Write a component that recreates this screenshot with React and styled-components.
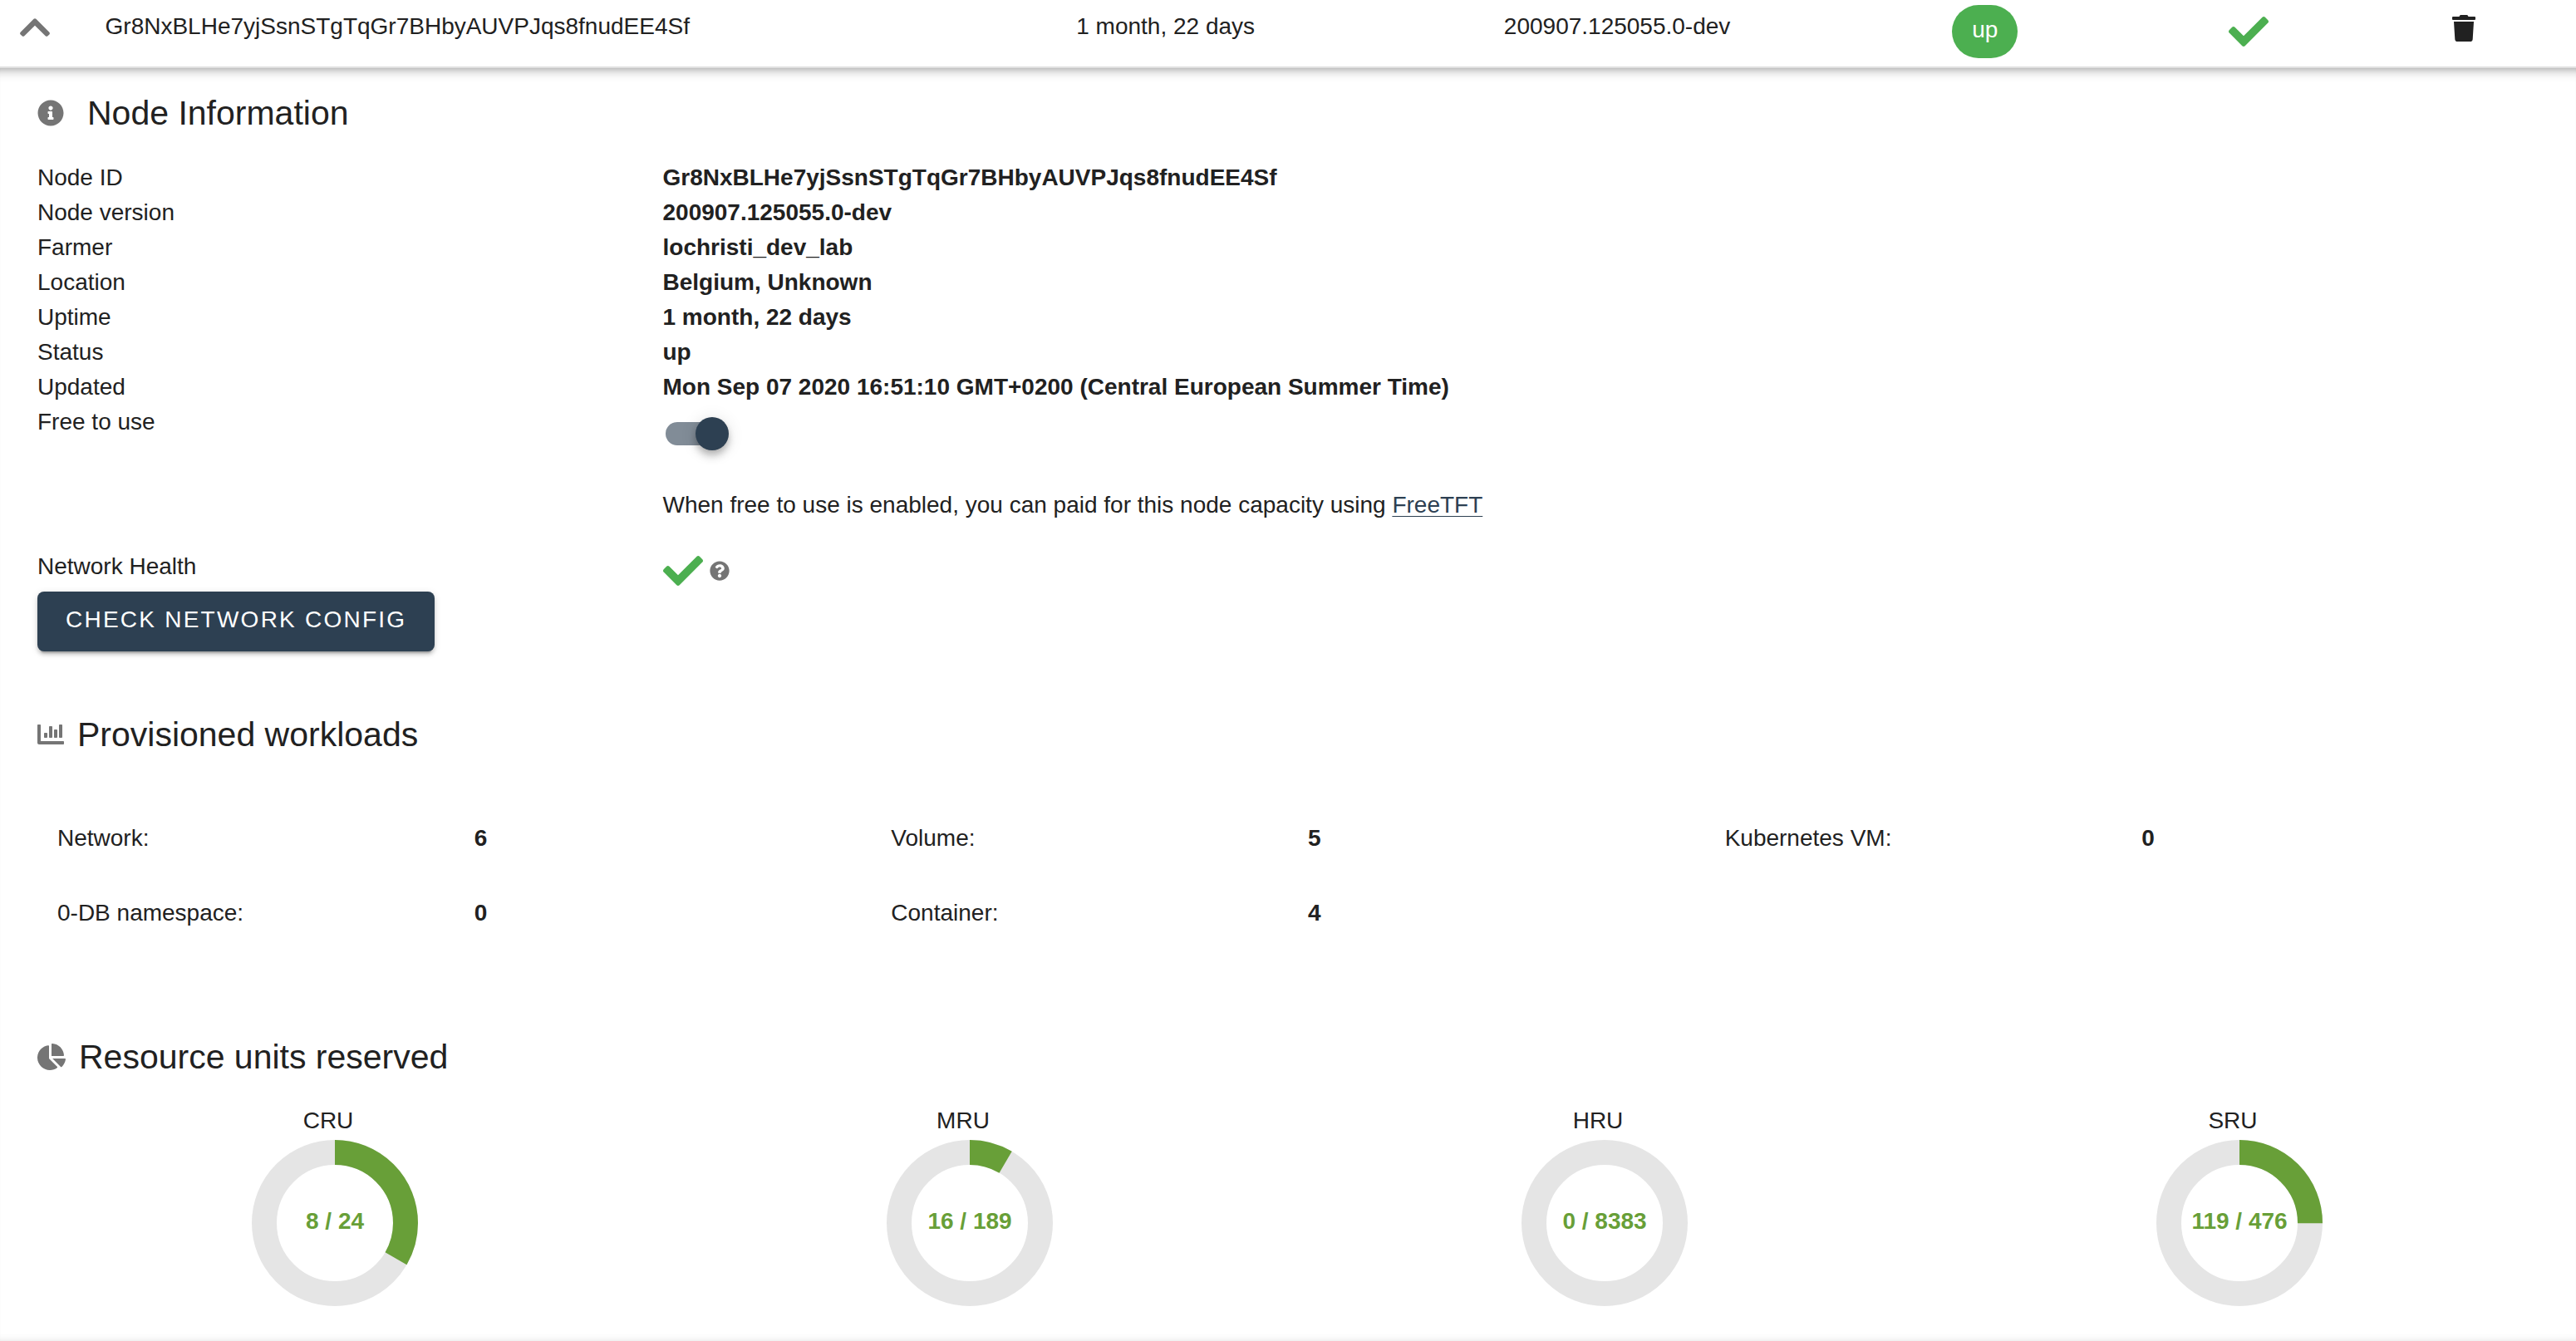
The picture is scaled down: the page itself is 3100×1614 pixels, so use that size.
import React, { useState } from "react";
import styled, { createGlobalStyle } from "styled-components";
import {
  FaChartBar,
  FaChartPie,
  FaCheck,
  FaChevronUp,
  FaInfoCircle,
  FaQuestionCircle,
  FaTrash,
} from "react-icons/fa";

const GlobalStyle = createGlobalStyle`
  *, *::before, *::after { box-sizing: border-box; }
  body {
    margin: 0;
    background: #fff;
    color: #212121;
    font-family: "Liberation Sans", Arial, Helvetica, sans-serif;
    font-size: 28px;
    line-height: 42px;
  }
`;

const Page = styled.main`
  display: flex;
  flex-direction: column;
  height: 100vh;
  overflow: hidden;
`;

const NodeTable = styled.table`
  width: 100%;
  table-layout: fixed;
  border-collapse: collapse;
  border-bottom: 2px solid #e0e0e0;
`;

const Column = styled.col`
  width: ${(p) => p.$share}%;
`;

const cellPadding = {
  text: "11px 32px 0",
  toggle: "12px 0 0 21px",
  chip: "6px 32px 0",
  check: "14px 32px 0",
  action: "18px 32px 0",
};

const Cell = styled.td`
  height: 81px;
  padding: ${(p) => cellPadding[p.$kind || "text"]};
  vertical-align: top;
`;

const IconButton = styled.button`
  display: block;
  padding: 0;
  border: 0;
  background: none;
  color: ${(p) => p.$color};
  cursor: pointer;

  svg { display: block; }
`;

const Icon = styled.span`
  display: flex;
  flex: none;
  color: ${(p) => p.$color || "#757575"};
  svg { display: block; }
`;

const Chip = styled.span`
  display: inline-flex;
  align-items: center;
  height: 64px;
  padding: 0 24px 4px;
  border-radius: 32px;
  background: #4caf50;
  color: #fff;
`;

const Details = styled.section`
  flex: none;
  margin: 0 -8px;
  padding: 26px 53px 48px;
  box-shadow: inset 0 8px 16px -10px rgba(50, 50, 50, 0.75),
    inset 0 -8px 16px -10px rgba(50, 50, 50, 0.75);
`;

const Title = styled.h2`
  display: flex;
  align-items: center;
  gap: ${(p) => p.$gap || 16}px;
  margin: 0;
  font-size: 41px;
  font-weight: 400;
  line-height: 56px;
`;

const InfoGrid = styled.dl`
  display: grid;
  grid-template-columns: 1fr 3fr;
  margin: 29px 0 72px;
`;

const Term = styled.dt``;

const Value = styled.dd`
  margin: 0;
  font-weight: ${(p) => (p.$plain ? 400 : 700)};
`;

const Switch = styled.input`
  position: relative;
  display: block;
  appearance: none;
  width: 72px;
  height: 28px;
  margin: 21px 3px 51px;
  border-radius: 14px;
  background: #818c97;
  cursor: pointer;

  &::before {
    content: "";
    position: absolute;
    top: -6px;
    left: -4px;
    width: 40px;
    height: 40px;
    border-radius: 50%;
    background: #2d4052;
    box-shadow: 0 4px 8px -2px rgba(0, 0, 0, 0.2), 0 8px 10px rgba(0, 0, 0, 0.14),
      0 2px 20px rgba(0, 0, 0, 0.12);
  }

  &:checked::before { left: 36px; }
`;

const Note = styled.p`
  margin: 0 0 32px;
`;

const Link = styled.a`
  color: #2d4052;
  text-decoration: underline;
  text-decoration-thickness: 1px;
  text-underline-offset: 4px;
`;

const Health = styled.div`
  display: flex;
  align-items: center;
  gap: 8px;
  height: 52px;
`;

const CheckButton = styled.button`
  display: block;
  height: 72px;
  margin-top: 9px;
  padding: 0 34px 4px;
  border: 0;
  border-radius: 8px;
  background: #2d4052;
  box-shadow: 0 6px 2px -4px rgba(0, 0, 0, 0.2), 0 4px 4px rgba(0, 0, 0, 0.14),
    0 2px 10px rgba(0, 0, 0, 0.12);
  color: #fff;
  font: inherit;
  letter-spacing: 0.08em;
  text-transform: uppercase;
  cursor: pointer;
`;

const Workloads = styled.dl`
  display: grid;
  grid-template-columns: repeat(3, 1fr);
  margin: 52px 0 100px;
`;

const Workload = styled.div`
  display: grid;
  grid-template-columns: 1fr 1fr;

  > * { padding: 24px; }
`;

const Resources = styled.div`
  display: grid;
  grid-template-columns: repeat(4, 1fr);
  margin: 28px -22px 0 -24px;
`;

const Resource = styled.figure`
  display: flex;
  flex-direction: column;
  align-items: center;
  margin: 0;
`;

const ResourceName = styled.figcaption`
  padding-right: 16px;
`;

const Donut = styled.div`
  display: grid;
  place-items: center;

  > * { grid-area: 1 / 1; }
  svg { display: block; }
`;

const DonutText = styled.span`
  padding-bottom: 4px;
  color: #689f38;
  font-weight: 700;
`;

const facts = [
  ["Node ID", "Gr8NxBLHe7yjSsnSTgTqGr7BHbyAUVPJqs8fnudEE4Sf"],
  ["Node version", "200907.125055.0-dev"],
  ["Farmer", "lochristi_dev_lab"],
  ["Location", "Belgium, Unknown"],
  ["Uptime", "1 month, 22 days"],
  ["Status", "up"],
  ["Updated", "Mon Sep 07 2020 16:51:10 GMT+0200 (Central European Summer Time)"],
];

const workloads = [
  ["Network:", 6],
  ["Volume:", 5],
  ["Kubernetes VM:", 0],
  ["0-DB namespace:", 0],
  ["Container:", 4],
];

const resources = [
  { name: "CRU", used: 8, total: 24 },
  { name: "MRU", used: 16, total: 189 },
  { name: "HRU", used: 0, total: 8383 },
  { name: "SRU", used: 119, total: 476 },
];

const columnShares = [3.05, 37.7, 16.6, 17.4, 10.75, 8.6, 5.9];

function ResourceDonut({ name, used, total }) {
  const length = 2 * Math.PI * 85;
  return (
    <Resource>
      <ResourceName>{name}</ResourceName>
      <Donut>
        <svg width="204" height="204" viewBox="-102 -102 204 204" aria-hidden="true">
          <circle r="85" fill="none" stroke="#e5e5e5" strokeWidth="30" />
          {used > 0 && (
            <circle
              r="85"
              fill="none"
              stroke="#689f38"
              strokeWidth="30"
              strokeDasharray={`${(length * used) / total} ${length}`}
              transform="rotate(-90)"
            />
          )}
        </svg>
        <DonutText>{used} / {total}</DonutText>
      </Donut>
    </Resource>
  );
}

export default function App() {
  const [free, setFree] = useState(true);

  return (
    <>
      <GlobalStyle />
      <Page>
        <NodeTable>
          <colgroup>
            {columnShares.map((share, i) => <Column key={i} $share={share} />)}
          </colgroup>
          <tbody>
            <tr>
              <Cell $kind="toggle">
                <IconButton $color="#757575" aria-label="Collapse node"><FaChevronUp size={42} /></IconButton>
              </Cell>
              <Cell>Gr8NxBLHe7yjSsnSTgTqGr7BHbyAUVPJqs8fnudEE4Sf</Cell>
              <Cell>1 month, 22 days</Cell>
              <Cell>200907.125055.0-dev</Cell>
              <Cell $kind="chip"><Chip>up</Chip></Cell>
              <Cell $kind="check"><Icon $color="#4caf50"><FaCheck size={48} /></Icon></Cell>
              <Cell $kind="action">
                <IconButton $color="#212121" aria-label="Delete node"><FaTrash size={32} /></IconButton>
              </Cell>
            </tr>
          </tbody>
        </NodeTable>

        <Details>
          <Title $gap={28}><Icon><FaInfoCircle size={32} /></Icon>Node Information</Title>
          <InfoGrid>
            {facts.map(([term, value]) => (
              <React.Fragment key={term}>
                <Term>{term}</Term>
                <Value>{value}</Value>
              </React.Fragment>
            ))}
            <Term><label htmlFor="free-to-use">Free to use</label></Term>
            <Value $plain>
              <Switch
                id="free-to-use"
                type="checkbox"
                role="switch"
                checked={free}
                onChange={(e) => setFree(e.target.checked)}
              />
              <Note>
                When free to use is enabled, you can paid for this node capacity using{" "}
                <Link href="#freetft">FreeTFT</Link>
              </Note>
            </Value>
            <Term>
              Network Health
              <CheckButton type="button">Check network config</CheckButton>
            </Term>
            <Value $plain>
              <Health>
                <Icon $color="#4caf50"><FaCheck size={48} /></Icon>
                <Icon><FaQuestionCircle size={24} /></Icon>
              </Health>
            </Value>
          </InfoGrid>

          <Title><Icon><FaChartBar size={32} /></Icon>Provisioned workloads</Title>
          <Workloads>
            {workloads.map(([name, count]) => (
              <Workload key={name}>
                <Term>{name}</Term>
                <Value>{count}</Value>
              </Workload>
            ))}
          </Workloads>

          <Title><Icon><FaChartPie size={34} /></Icon>Resource units reserved</Title>
          <Resources>
            {resources.map((r) => <ResourceDonut key={r.name} {...r} />)}
          </Resources>
        </Details>
      </Page>
    </>
  );
}
